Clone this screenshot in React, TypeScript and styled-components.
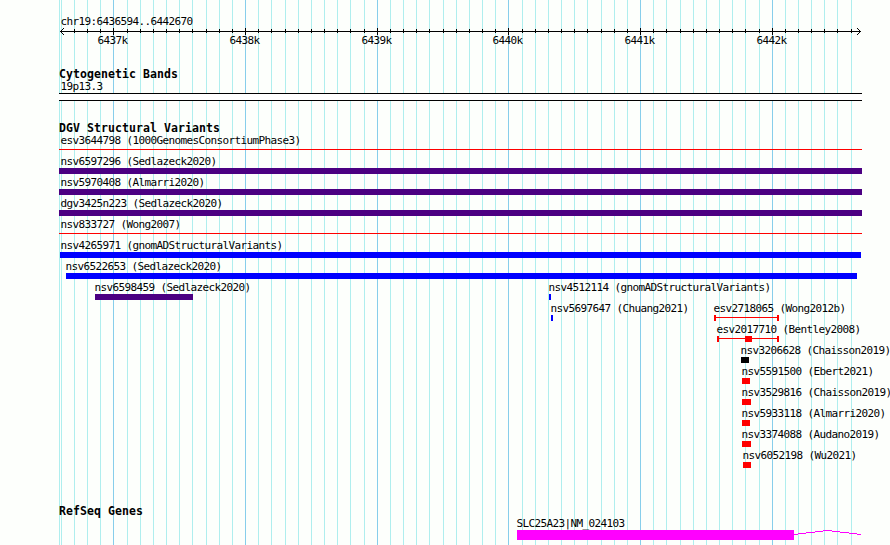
import React from 'react';
import styled, { createGlobalStyle } from 'styled-components';

interface FeatureModel {
  name: string;
  labelX: number;
  start: number;
  end: number;
  color: string;
  glyph?: 'box' | 'line' | 'range';
  core?: [number, number];
}

const INDIGO = '#4b0082';
const BLUE = '#0000ff';
const RED = '#ff0000';
const BLACK = '#000000';

const WIDTH = 890;
const HEIGHT = 545;

const majorTicks = [113, 245, 377, 508, 640, 772];
const minorTicks = [
  61, 74, 87, 100, 127, 140, 153, 166, 179, 192, 206, 219, 232, 258, 271, 285, 298, 311, 324, 337, 350, 364,
  390, 403, 416, 429, 443, 456, 469, 482, 495, 522, 535, 548, 561, 574, 587, 601, 614, 627,
  653, 666, 680, 693, 706, 719, 732, 745, 759, 785, 798, 811, 824, 837, 851,
];

const variantRows: FeatureModel[][] = [
  [{ name: 'esv3644798 (1000GenomesConsortiumPhase3)', labelX: 60, start: 59, end: 862, color: RED, glyph: 'line' }],
  [{ name: 'nsv6597296 (Sedlazeck2020)', labelX: 60, start: 59, end: 862, color: INDIGO }],
  [{ name: 'nsv5970408 (Almarri2020)', labelX: 60, start: 59, end: 862, color: INDIGO }],
  [{ name: 'dgv3425n223 (Sedlazeck2020)', labelX: 60, start: 59, end: 862, color: INDIGO }],
  [{ name: 'nsv833727 (Wong2007)', labelX: 60, start: 59, end: 862, color: RED, glyph: 'line' }],
  [{ name: 'nsv4265971 (gnomADStructuralVariants)', labelX: 60, start: 60, end: 861, color: BLUE }],
  [{ name: 'nsv6522653 (Sedlazeck2020)', labelX: 65, start: 66, end: 857, color: BLUE }],
  [
    { name: 'nsv6598459 (Sedlazeck2020)', labelX: 94, start: 95, end: 193, color: INDIGO },
    { name: 'nsv4512114 (gnomADStructuralVariants)', labelX: 548, start: 549, end: 551, color: BLUE },
  ],
  [
    { name: 'nsv5697647 (Chuang2021)', labelX: 550, start: 551, end: 553, color: BLUE },
    { name: 'esv2718065 (Wong2012b)', labelX: 713, start: 714, end: 779, color: RED, glyph: 'range' },
  ],
  [
    {
      name: 'esv2017710 (Bentley2008)',
      labelX: 716,
      start: 717,
      end: 779,
      color: RED,
      glyph: 'range',
      core: [745, 752],
    },
  ],
  [{ name: 'nsv3206628 (Chaisson2019)', labelX: 740, start: 741, end: 749, color: BLACK }],
  [{ name: 'nsv5591500 (Ebert2021)', labelX: 741, start: 742, end: 750, color: RED }],
  [{ name: 'nsv3529816 (Chaisson2019)', labelX: 741, start: 742, end: 751, color: RED }],
  [{ name: 'nsv5933118 (Almarri2020)', labelX: 741, start: 742, end: 750, color: RED }],
  [{ name: 'nsv3374088 (Audano2019)', labelX: 741, start: 742, end: 751, color: RED }],
  [{ name: 'nsv6052198 (Wu2021)', labelX: 742, start: 743, end: 751, color: RED }],
];

const GridLines = () => (
  <Backdrop width={WIDTH} height={HEIGHT} shapeRendering="crispEdges">
    {[59, ...minorTicks].map((x) => (
      <rect key={x} x={x} y={0} width={1} height={HEIGHT} fill="#afeeee" />
    ))}
    {majorTicks.map((x) => (
      <rect key={x} x={x} y={0} width={1} height={HEIGHT} fill="#87ceeb" />
    ))}
  </Backdrop>
);

const Ruler = () => (
  <RulerBlock>
    <Label $x={60}>chr19:6436594..6442670</Label>
    <Drawing width={WIDTH} height={7} shapeRendering="crispEdges">
      <rect x={60} y={3} width={801} height={1} />
      {minorTicks.slice(1).map((x) => (
        <rect key={x} x={x} y={1} width={1} height={4} />
      ))}
      {majorTicks.map((x) => (
        <rect key={x} x={x} y={0} width={1} height={7} />
      ))}
      {[1, 2, 3].map((d) => (
        <React.Fragment key={d}>
          <rect x={60 + d} y={3 - d} width={1} height={1} />
          <rect x={60 + d} y={3 + d} width={1} height={1} />
          <rect x={860 - d} y={3 - d} width={1} height={1} />
          <rect x={860 - d} y={3 + d} width={1} height={1} />
        </React.Fragment>
      ))}
    </Drawing>
    <TickLabels>
      {majorTicks.map((x, i) => (
        <Cell key={x}>
          <Label $x={x - 16}>{6437 + i}k</Label>
        </Cell>
      ))}
    </TickLabels>
  </RulerBlock>
);

const Feature = ({ feature }: { feature: FeatureModel }) => {
  const { name, labelX, start, end, color, glyph = 'box', core } = feature;
  return (
    <Cell>
      <Label $x={labelX}>{name}</Label>
      {glyph === 'box' && <Bar $x={start} $width={end - start} $color={color} />}
      {glyph === 'line' && <ThinLine $x={start} $width={end - start} $color={color} />}
      {glyph === 'range' && (
        <Drawing width={WIDTH} height={6} shapeRendering="crispEdges" fill={color}>
          <rect x={start} y={2} width={end - start} height={1} />
          <rect x={start} y={0} width={2} height={6} />
          <rect x={end - 2} y={0} width={2} height={6} />
          {core && <rect x={core[0]} y={0} width={core[1] - core[0]} height={6} />}
        </Drawing>
      )}
    </Cell>
  );
};

const App = () => (
  <>
    <GlobalStyle />
    <Browser>
      <GridLines />
      <Ruler />
      <Track $gap={20}>
        <TrackTitle>Cytogenetic Bands</TrackTitle>
        <Label $x={60}>19p13.3</Label>
        <Band />
      </Track>
      <Track $gap={20}>
        <TrackTitle>DGV Structural Variants</TrackTitle>
        {variantRows.map((row) => (
          <VariantRow key={row[0].name}>
            {row.map((feature) => (
              <Feature key={feature.name} feature={feature} />
            ))}
          </VariantRow>
        ))}
      </Track>
      <Track $gap={35}>
        <TrackTitle>RefSeq Genes</TrackTitle>
        <Label $x={516}>SLC25A23|NM_024103</Label>
        <Drawing width={WIDTH} height={10} shapeRendering="crispEdges" fill="#ff00ff">
          <rect x={517} y={0} width={277} height={10} />
          <path d="M794 4.5L827.5 .5L861 4.5" fill="none" stroke="#ff00ff" />
        </Drawing>
      </Track>
    </Browser>
  </>
);

export default App;

const GlobalStyle = createGlobalStyle`
  body {
    margin: 0;
    background: #fdfffc;
    overflow: hidden;
  }
`;

const Browser = styled.div`
  position: relative;
  box-sizing: border-box;
  width: ${WIDTH}px;
  height: ${HEIGHT}px;
  padding-top: 14px;
  overflow: hidden;
  background: #fdfffc;
  color: #000;
  font-family: 'DejaVu Sans Mono', 'Liberation Mono', monospace;
`;

const Backdrop = styled.svg`
  position: absolute;
  inset: 0;
`;

const Drawing = styled.svg`
  display: block;
`;

const RulerBlock = styled.div`
  position: relative;
  height: 33px;
`;

const Track = styled.section<{ $gap: number }>`
  position: relative;
  padding-top: ${({ $gap }) => $gap}px;
`;

const TrackTitle = styled.h2`
  height: 12px;
  margin: 0 0 0 59px;
  font-size: 11.5px;
  font-weight: 700;
  letter-spacing: 0.077px;
  line-height: 14px;
  white-space: pre;
`;

const Label = styled.div<{ $x: number }>`
  height: 14px;
  padding-left: ${({ $x }) => $x + 0.4}px;
  font-size: 11px;
  letter-spacing: -0.622px;
  line-height: 16px;
  white-space: pre;
`;

const Row = styled.div`
  display: grid;
  grid-template-columns: ${WIDTH}px;
`;

const TickLabels = styled(Row)`
  margin-top: -2px;
`;

const VariantRow = styled(Row)`
  height: 21px;
`;

/* every cell of a row shares the same track, so features are offset from the left edge */
const Cell = styled.div`
  grid-area: 1 / 1;
`;

const Bar = styled.div<{ $x: number; $width: number; $color: string }>`
  width: ${({ $width }) => $width}px;
  height: 6px;
  margin-left: ${({ $x }) => $x}px;
  background: ${({ $color }) => $color};
`;

const ThinLine = styled(Bar)`
  height: 1px;
  margin-top: 2px;
`;

const Band = styled.div`
  box-sizing: border-box;
  width: 803px;
  height: 8px;
  margin-left: 59px;
  border: solid #000;
  border-width: 1px 0;
  background: #fff;
`;
